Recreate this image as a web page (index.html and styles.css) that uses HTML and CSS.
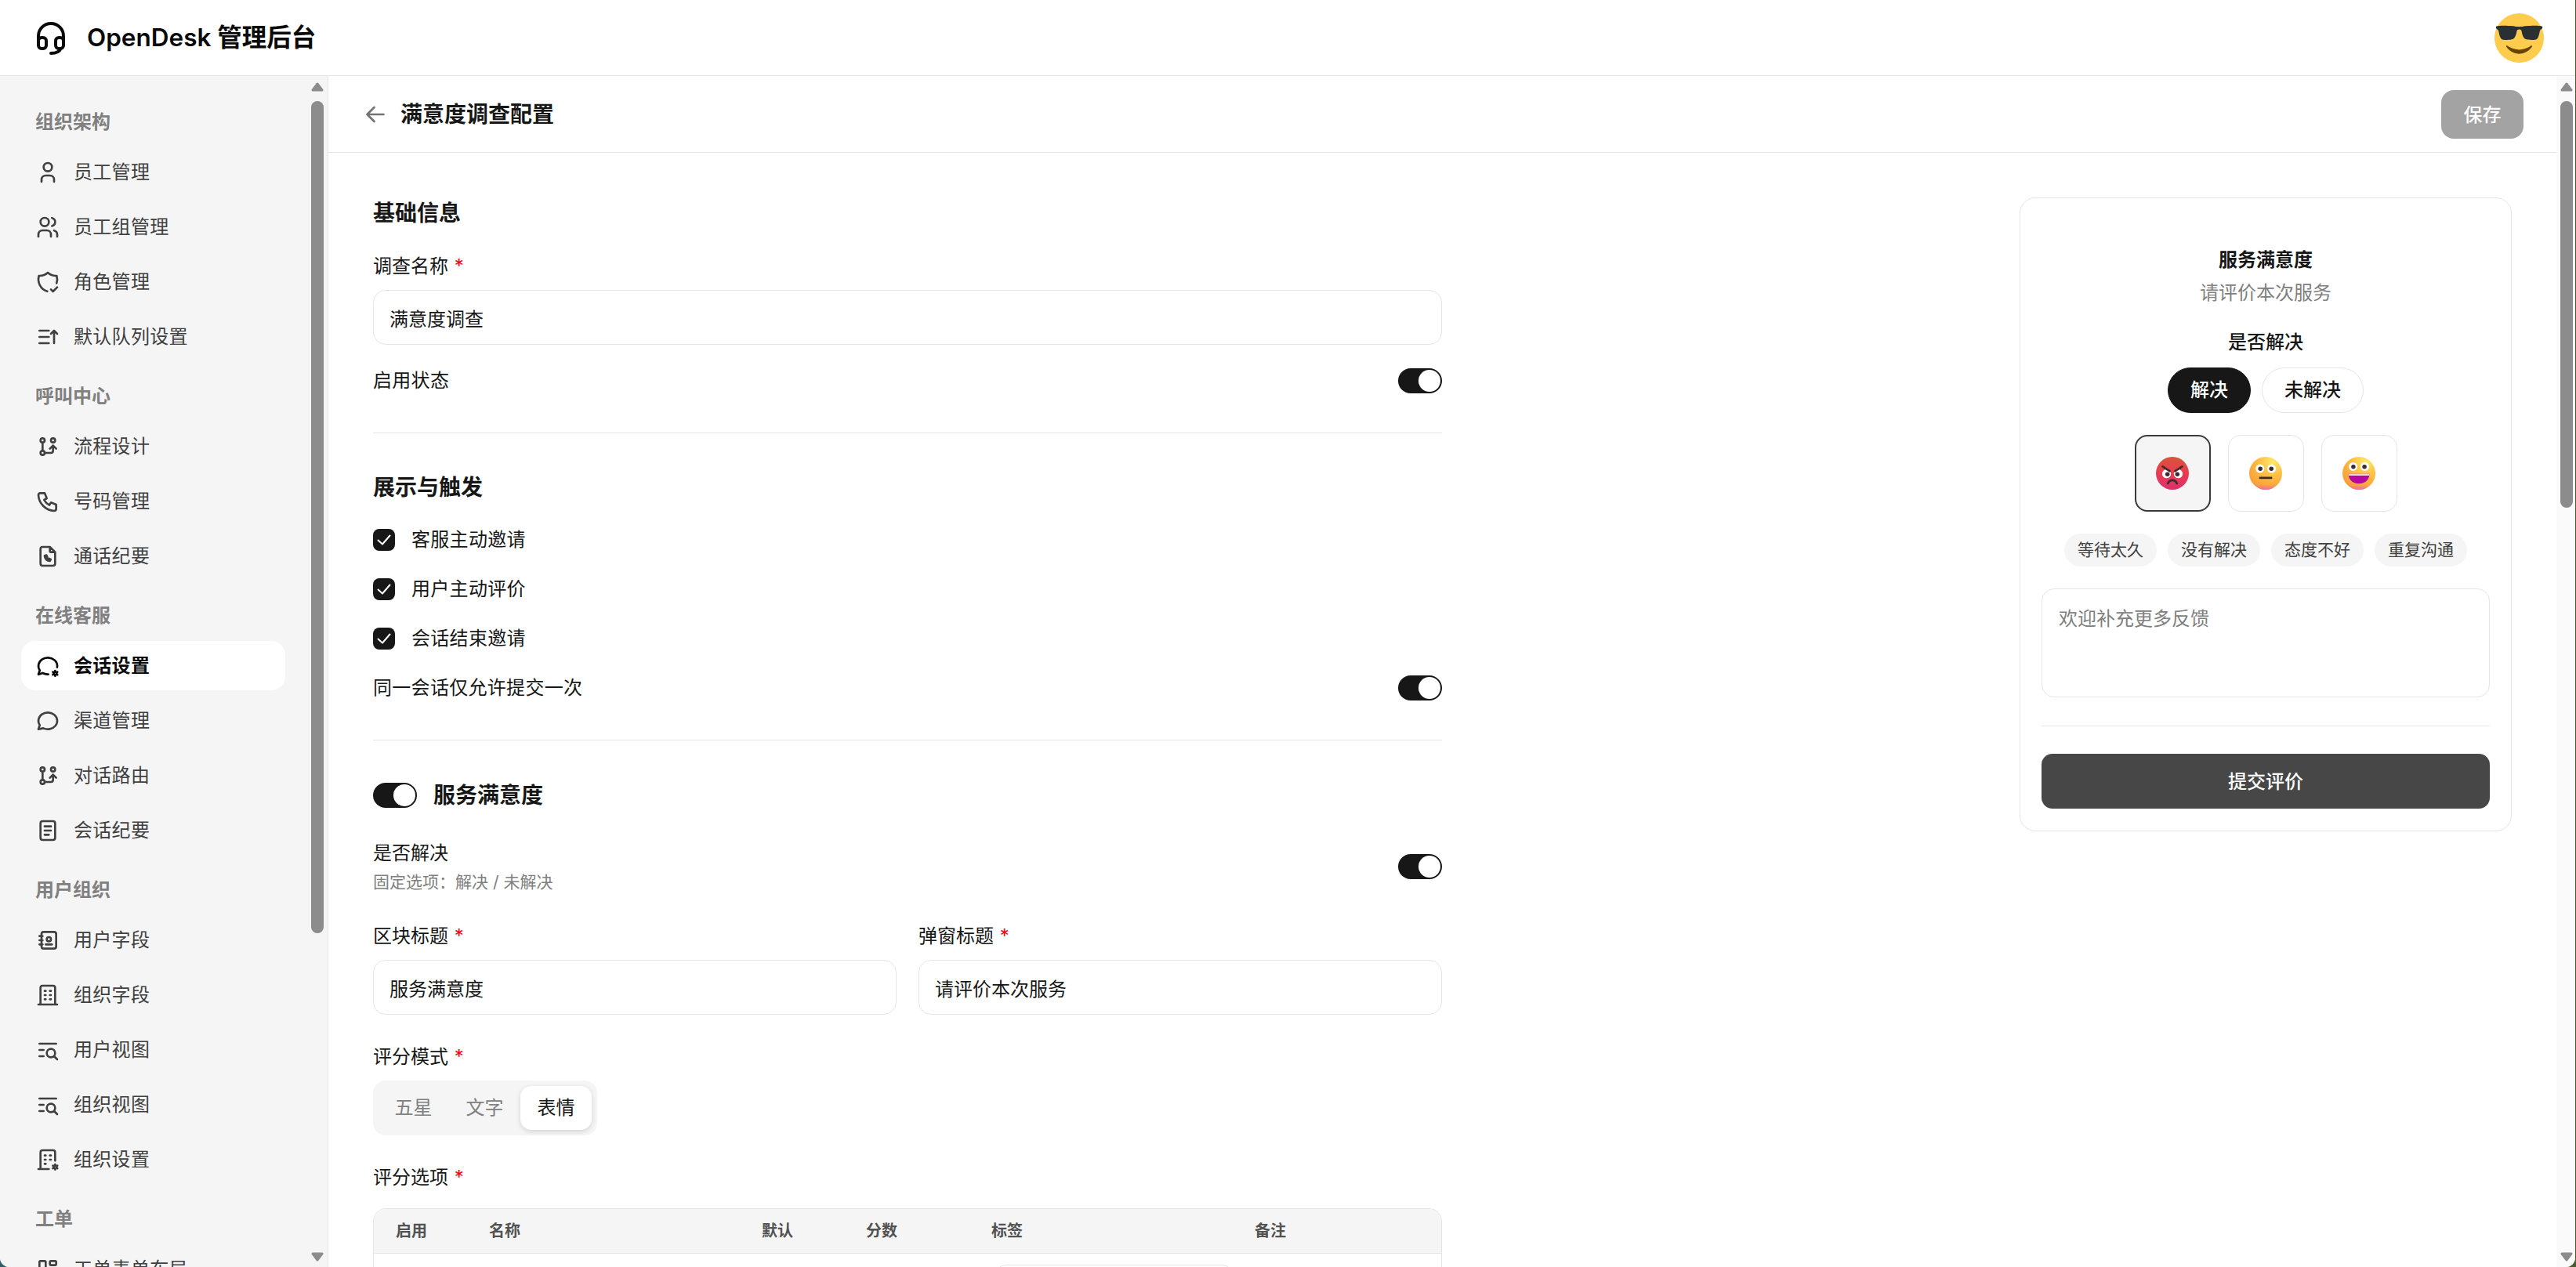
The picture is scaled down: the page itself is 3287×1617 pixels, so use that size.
FILE: index.html
```html
<!DOCTYPE html>
<html>
<head>
  <meta charset="UTF-8">
  <meta name="viewport" content="width=device-width, initial-scale=1.0">
  <title>OpenDesk 管理后台</title>
  <link rel="stylesheet" href="styles.css">
</head>
<body>
  <!-- Icon sprite -->
  <svg class="sprite" xmlns="http://www.w3.org/2000/svg">
    <defs>
      <linearGradient id="g-angry" x1="0" y1="0" x2="0" y2="1">
        <stop offset="0" stop-color="#d6563a"/>
        <stop offset="0.45" stop-color="#ea3d4c"/>
        <stop offset="1" stop-color="#de2f6c"/>
      </linearGradient>
      <radialGradient id="g-warm" cx="0.72" cy="0.15" r="1">
        <stop offset="0" stop-color="#ffe96b"/>
        <stop offset="0.45" stop-color="#fdbd42"/>
        <stop offset="0.9" stop-color="#f89d38"/>
        <stop offset="1" stop-color="#f5923f"/>
      </radialGradient>
      <linearGradient id="g-blush" x1="0" y1="0.84" x2="0" y2="1">
        <stop offset="0" stop-color="#f06fa0" stop-opacity="0"/>
        <stop offset="1" stop-color="#f06fa0"/>
      </linearGradient>
    </defs>
    <symbol id="i-headset" viewBox="0 0 24 24"><path d="M4 14v-3a8 8 0 1 1 16 0v3M18 19c0 1.657-2.686 3-6 3M4 14a2 2 0 0 1 2-2h1a2 2 0 0 1 2 2v3a2 2 0 0 1-2 2h-1a2 2 0 0 1-2-2zM15 14a2 2 0 0 1 2-2h1a2 2 0 0 1 2 2v3a2 2 0 0 1-2 2h-1a2 2 0 0 1-2-2z"/></symbol>
    <symbol id="i-user" viewBox="0 0 24 24"><path d="M8 7a4 4 0 1 0 8 0a4 4 0 0 0-8 0M6 21v-2a4 4 0 0 1 4-4h4a4 4 0 0 1 4 4v2"/></symbol>
    <symbol id="i-users" viewBox="0 0 24 24"><path d="M5 7a4 4 0 1 0 8 0a4 4 0 1 0-8 0M3 21v-2a4 4 0 0 1 4-4h4a4 4 0 0 1 4 4v2M16 3.13a4 4 0 0 1 0 7.75M21 21v-2a4 4 0 0 0-3-3.85"/></symbol>
    <symbol id="i-shield" viewBox="0 0 24 24"><path d="M11.46 20.846a12 12 0 0 1-7.96-14.846a12 12 0 0 0 8.5-3a12 12 0 0 0 8.5 3a12 12 0 0 1-.09 7.06M15 19l2 2l4-4"/></symbol>
    <symbol id="i-queue" viewBox="0 0 24 24"><path d="M4 6h9M4 12h9M4 18h9M15 9l3-3l3 3M18 6v12"/></symbol>
    <symbol id="i-branch" viewBox="0 0 24 24"><path d="M5 18a2 2 0 1 0 4 0a2 2 0 1 0-4 0M5 6a2 2 0 1 0 4 0a2 2 0 1 0-4 0M15 6a2 2 0 1 0 4 0a2 2 0 1 0-4 0M7 8v8M9 18h6a2 2 0 0 0 2-2v-5M14 14l3-3l3 3"/></symbol>
    <symbol id="i-phone" viewBox="0 0 24 24"><path d="M5 4h4l2 5l-2.5 1.5a11 11 0 0 0 5 5l1.5-2.5l5 2v4a2 2 0 0 1-2 2a16 16 0 0 1-15-15a2 2 0 0 1 2-2"/></symbol>
    <symbol id="i-file-phone" viewBox="0 0 24 24"><path d="M14 3v4a1 1 0 0 0 1 1h4M17 21h-10a2 2 0 0 1-2-2v-14a2 2 0 0 1 2-2h7l5 5v11a2 2 0 0 1-2 2zM9 11.5c0 2.8 2.2 5 5 5l.8-1.6l-1.8-.8l-.8.8c-.7-.3-1.2-.9-1.5-1.5l.8-.8l-.8-1.7z"/></symbol>
    <symbol id="i-chat-cog" viewBox="0 0 24 24"><path d="M12.5 19.9c-1.8.1-3.7-.3-5.5-1.2l-4 1.3l1.3-3.9c-2.324-3.437-1.426-7.872 2.1-10.374c3.526-2.501 8.59-2.296 11.845.48c2.2 1.9 3.1 4.5 2.7 7"/><path d="M19 16.5v1M19 20.5v1M16.8 17.7l.9.5M20.3 19.8l.9.5M16.8 20.3l.9-.5M20.3 18.2l.9-.5"/><circle cx="19" cy="19" r="1.4"/></symbol>
    <symbol id="i-chat" viewBox="0 0 24 24"><path d="M3 20l1.3-3.9c-2.324-3.437-1.426-7.872 2.1-10.374c3.526-2.501 8.59-2.296 11.845.48c3.255 2.777 3.695 7.266 1.029 10.501c-2.666 3.235-7.615 4.215-11.574 2.293l-4.7 1"/></symbol>
    <symbol id="i-note" viewBox="0 0 24 24"><path d="M5 5a2 2 0 0 1 2-2h10a2 2 0 0 1 2 2v14a2 2 0 0 1-2 2h-10a2 2 0 0 1-2-2zM9 8h6M9 12h6M9 16h4"/></symbol>
    <symbol id="i-contacts" viewBox="0 0 24 24"><path d="M20 6v12a2 2 0 0 1-2 2h-10a2 2 0 0 1-2-2v-12a2 2 0 0 1 2-2h10a2 2 0 0 1 2 2zM10 16h6M11 11a2 2 0 1 0 4 0a2 2 0 1 0-4 0M4 8h3M4 12h3M4 16h3"/></symbol>
    <symbol id="i-building" viewBox="0 0 24 24"><path d="M3 21h18M9 8h1M9 12h1M9 16h1M14 8h1M14 12h1M14 16h1M5 21v-16a2 2 0 0 1 2-2h10a2 2 0 0 1 2 2v16"/></symbol>
    <symbol id="i-list-search" viewBox="0 0 24 24"><path d="M11 15a4 4 0 1 0 8 0a4 4 0 1 0-8 0M18 18l3 3M4 6h16M4 12h4M4 18h4"/></symbol>
    <symbol id="i-building-cog" viewBox="0 0 24 24"><path d="M3 21h10M9 8h1M9 12h1M9 16h1M14 8h1M14 12h1M5 21v-16a2 2 0 0 1 2-2h10a2 2 0 0 1 2 2v8"/><path d="M19 16.5v1M19 20.5v1M16.8 17.7l.9.5M20.3 19.8l.9.5M16.8 20.3l.9-.5M20.3 18.2l.9-.5"/><circle cx="19" cy="19" r="1.4"/></symbol>
    <symbol id="i-layout" viewBox="0 0 24 24"><path d="M4 5a1 1 0 0 1 1-1h4a1 1 0 0 1 1 1v14a1 1 0 0 1-1 1h-4a1 1 0 0 1-1-1zM14 5a1 1 0 0 1 1-1h4a1 1 0 0 1 1 1v2a1 1 0 0 1-1 1h-4a1 1 0 0 1-1-1zM14 13a1 1 0 0 1 1-1h4a1 1 0 0 1 1 1v6a1 1 0 0 1-1 1h-4a1 1 0 0 1-1-1z"/></symbol>
    <symbol id="i-back" viewBox="0 0 24 24"><path d="M5 12h14M5 12l6 6M5 12l6-6"/></symbol>
    <symbol id="i-check" viewBox="0 0 28 28"><path d="M6.5 14.5l5.5 5l9.5-11"/></symbol>
    <symbol id="tri-up" viewBox="0 0 16 12"><path d="M8 2L14 10H2z"/></symbol>
    <symbol id="tri-down" viewBox="0 0 16 12"><path d="M8 10L14 2H2z"/></symbol>
    <symbol id="e-cool" viewBox="0 0 36 36">
      <path fill="#FFCC4D" d="M36 18c0 9.941-8.059 18-18 18-9.94 0-18-8.059-18-18C0 8.06 8.06 0 18 0c9.941 0 18 8.06 18 18"/>
      <path fill="#292F33" d="M1.24 11.018c.24.239 1.438.957 1.677 1.675.24.717.72 4.784 2.158 5.981 1.483 1.232 7.077.774 8.148.24 2.397-1.195 2.691-4.531 3.115-6.221.239-.957 1.677-.957 1.677-.957s1.438 0 1.678.956c.424 1.691.72 5.027 3.115 6.221 1.072.535 6.666.994 8.151-.238 1.436-1.197 1.915-5.264 2.155-5.982.238-.717 1.438-1.435 1.677-1.674.241-.239.241-1.196 0-1.436-.479-.478-6.134-.904-12.223-.239-1.215.133-1.677.478-4.554.478-2.875 0-3.339-.346-4.553-.478-6.085-.664-11.741-.238-12.221.24-.239.239-.239 1.196 0 1.435z"/>
      <path fill="#664500" d="M27.335 23.629c-.178-.161-.444-.171-.635-.029-.039.029-3.922 2.9-8.7 2.9-4.766 0-8.662-2.871-8.7-2.9-.191-.142-.457-.13-.635.029-.177.16-.217.424-.094.628C8.7 24.472 11.788 29.5 18 29.5s9.301-5.028 9.429-5.243c.123-.205.084-.468-.094-.628z"/>
    </symbol>
    <symbol id="e-angry" viewBox="0 0 32 32">
      <circle cx="16" cy="16" r="16" fill="url(#g-angry)"/>
      <circle cx="10.3" cy="16.5" r="4.3" fill="#fff"/>
      <circle cx="21.7" cy="16.5" r="4.3" fill="#fff"/>
      <circle cx="11.2" cy="17" r="2.1" fill="#402a32"/>
      <circle cx="20.8" cy="17" r="2.1" fill="#402a32"/>
      <path d="M6.5 9.5l7 4.5M25.5 9.5l-7 4.5M11.5 26c1-2.2 2.8-3.2 4.5-3.2s3.5 1 4.5 3.2" fill="none" stroke="#402a32" stroke-width="2" stroke-linecap="round"/>
    </symbol>
    <symbol id="e-neutral" viewBox="0 0 32 32">
      <circle cx="16" cy="16" r="16" fill="url(#g-warm)"/>
      <circle cx="16" cy="16" r="16" fill="url(#g-blush)"/>
      <circle cx="10.5" cy="11.5" r="4.2" fill="#fff"/>
      <circle cx="21.8" cy="11.5" r="4.2" fill="#fff"/>
      <circle cx="10.8" cy="11.7" r="2.1" fill="#402a32"/>
      <circle cx="21.5" cy="11.7" r="2.1" fill="#402a32"/>
      <path d="M10.5 20.5h11" fill="none" stroke="#402a32" stroke-width="2" stroke-linecap="round"/>
    </symbol>
    <symbol id="e-happy" viewBox="0 0 32 32">
      <circle cx="16" cy="16" r="16" fill="url(#g-warm)"/>
      <circle cx="16" cy="16" r="16" fill="url(#g-blush)"/>
      <circle cx="10.3" cy="9.5" r="4.2" fill="#fff"/>
      <circle cx="21.7" cy="9.5" r="4.2" fill="#fff"/>
      <circle cx="10.6" cy="9.7" r="2.1" fill="#402a32"/>
      <circle cx="21.4" cy="9.7" r="2.1" fill="#402a32"/>
      <path d="M5.8 16.5h20.4c0 5.5-4 9.5-10.2 9.5S5.800 22 5.800 16.500z" fill="#b8079c"/>
      <path d="M5.8 16.5h20.4c0 .7-.1 1.3-.2 1.8H6c-.1-.5-.2-1.100-.2-1.800z" fill="#f3d6ee"/>
    </symbol>
  </svg>

  <div class="app">
    <header class="topbar">
      <div class="brand">
        <svg class="brand-icon"><use href="#i-headset"/></svg>
        <span class="brand-name">OpenDesk 管理后台</span>
      </div>
      <svg class="avatar"><use href="#e-cool"/></svg>
    </header>

    <div class="layout">
      <aside class="sidebar">
        <nav class="side-nav">
          <div class="nav-group">
            <div class="nav-title">组织架构</div>
            <a class="nav-item"><svg class="nav-icon"><use href="#i-user"/></svg>员工管理</a>
            <a class="nav-item"><svg class="nav-icon"><use href="#i-users"/></svg>员工组管理</a>
            <a class="nav-item"><svg class="nav-icon"><use href="#i-shield"/></svg>角色管理</a>
            <a class="nav-item"><svg class="nav-icon"><use href="#i-queue"/></svg>默认队列设置</a>
          </div>
          <div class="nav-group">
            <div class="nav-title">呼叫中心</div>
            <a class="nav-item"><svg class="nav-icon"><use href="#i-branch"/></svg>流程设计</a>
            <a class="nav-item"><svg class="nav-icon"><use href="#i-phone"/></svg>号码管理</a>
            <a class="nav-item"><svg class="nav-icon"><use href="#i-file-phone"/></svg>通话纪要</a>
          </div>
          <div class="nav-group">
            <div class="nav-title">在线客服</div>
            <a class="nav-item active"><svg class="nav-icon"><use href="#i-chat-cog"/></svg>会话设置</a>
            <a class="nav-item"><svg class="nav-icon"><use href="#i-chat"/></svg>渠道管理</a>
            <a class="nav-item"><svg class="nav-icon"><use href="#i-branch"/></svg>对话路由</a>
            <a class="nav-item"><svg class="nav-icon"><use href="#i-note"/></svg>会话纪要</a>
          </div>
          <div class="nav-group">
            <div class="nav-title">用户组织</div>
            <a class="nav-item"><svg class="nav-icon"><use href="#i-contacts"/></svg>用户字段</a>
            <a class="nav-item"><svg class="nav-icon"><use href="#i-building"/></svg>组织字段</a>
            <a class="nav-item"><svg class="nav-icon"><use href="#i-list-search"/></svg>用户视图</a>
            <a class="nav-item"><svg class="nav-icon"><use href="#i-list-search"/></svg>组织视图</a>
            <a class="nav-item"><svg class="nav-icon"><use href="#i-building-cog"/></svg>组织设置</a>
          </div>
          <div class="nav-group">
            <div class="nav-title">工单</div>
            <a class="nav-item"><svg class="nav-icon"><use href="#i-layout"/></svg>工单表单布局</a>
          </div>
        </nav>
        <div class="scrollbar side-scrollbar">
          <svg class="scroll-arrow"><use href="#tri-up"/></svg>
          <div class="scroll-thumb"></div>
          <svg class="scroll-arrow bottom"><use href="#tri-down"/></svg>
        </div>
      </aside>

      <main class="main">
        <div class="page">
          <div class="page-header">
            <div class="page-title">
              <svg class="back-icon"><use href="#i-back"/></svg>
              <h1>满意度调查配置</h1>
            </div>
            <button class="save-btn">保存</button>
          </div>

          <div class="page-body">
            <form class="form">
              <h2 class="section-title">基础信息</h2>
              <label class="field-label first">调查名称 <span class="req">*</span></label>
              <input class="text-input" type="text" value="满意度调查">
              <div class="switch-row gap-m">
                <span>启用状态</span>
                <span class="toggle"><i></i></span>
              </div>
              <hr class="divider">

              <h2 class="section-title">展示与触发</h2>
              <div class="check-list">
                <div class="check-row"><svg class="checkbox"><use href="#i-check"/></svg>客服主动邀请</div>
                <div class="check-row"><svg class="checkbox"><use href="#i-check"/></svg>用户主动评价</div>
                <div class="check-row"><svg class="checkbox"><use href="#i-check"/></svg>会话结束邀请</div>
                <div class="switch-row">
                  <span>同一会话仅允许提交一次</span>
                  <span class="toggle"><i></i></span>
                </div>
              </div>
              <hr class="divider">

              <div class="section-toggle">
                <span class="toggle"><i></i></span>
                <h2 class="section-title">服务满意度</h2>
              </div>
              <div class="switch-row resolve-row">
                <div>
                  <div class="resolve-name">是否解决</div>
                  <div class="hint">固定选项：解决 / 未解决</div>
                </div>
                <span class="toggle"><i></i></span>
              </div>

              <div class="two-col">
                <div>
                  <label class="field-label">区块标题 <span class="req">*</span></label>
                  <input class="text-input" type="text" value="服务满意度">
                </div>
                <div>
                  <label class="field-label">弹窗标题 <span class="req">*</span></label>
                  <input class="text-input" type="text" value="请评价本次服务">
                </div>
              </div>

              <label class="field-label spaced">评分模式 <span class="req">*</span></label>
              <div class="segmented">
                <span class="segment">五星</span>
                <span class="segment">文字</span>
                <span class="segment active">表情</span>
              </div>

              <label class="field-label spaced">评分选项 <span class="req">*</span></label>
              <div class="options-table">
                <div class="options-head">
                  <span>启用</span>
                  <span>名称</span>
                  <span>默认</span>
                  <span>分数</span>
                  <span>标签</span>
                  <span>备注</span>
                </div>
                <div class="options-row">
                  <div class="tag-box"></div>
                </div>
              </div>
            </form>

            <aside class="preview">
              <div class="preview-title">服务满意度</div>
              <div class="preview-sub">请评价本次服务</div>
              <div class="preview-question">是否解决</div>
              <div class="pill-row">
                <span class="pill active">解决</span>
                <span class="pill">未解决</span>
              </div>
              <div class="emoji-row">
                <span class="emoji-box active"><svg class="emoji"><use href="#e-angry"/></svg></span>
                <span class="emoji-box"><svg class="emoji"><use href="#e-neutral"/></svg></span>
                <span class="emoji-box"><svg class="emoji"><use href="#e-happy"/></svg></span>
              </div>
              <div class="chip-row">
                <span class="chip">等待太久</span>
                <span class="chip">没有解决</span>
                <span class="chip">态度不好</span>
                <span class="chip">重复沟通</span>
              </div>
              <textarea class="feedback" placeholder="欢迎补充更多反馈"></textarea>
              <hr class="preview-divider">
              <button class="submit-btn" type="button">提交评价</button>
            </aside>
          </div>
        </div>
        <div class="scrollbar main-scrollbar">
          <svg class="scroll-arrow"><use href="#tri-up"/></svg>
          <div class="scroll-thumb"></div>
          <svg class="scroll-arrow bottom"><use href="#tri-down"/></svg>
        </div>
      </main>
    </div>
  </div>
</body>
</html>
```

FILE: styles.css
```css
:root {
  --ink: #171717;
  --text: #404040;
  --muted: #808080;
  --line: #e5e5e5;
  --soft: #f5f5f5;
  --thumb: #8c8c8c;
}

* {
  box-sizing: border-box;
}

html, body {
  height: 100%;
}

body {
  margin: 0;
  overflow: hidden;
  background: linear-gradient(90deg, #2f5f66, #4a5a2a);
  font-family: Inter, "Noto Sans CJK SC", sans-serif;
  font-size: 24px;
  line-height: 36px;
  color: var(--ink);
}

.sprite {
  display: block;
  width: 0;
  height: 0;
}

.app {
  width: 3286px;
  height: 100%;
  display: flex;
  flex-direction: column;
  background-color: white;
  border-radius: 0 0 12px 12px;
  overflow: hidden;
}

/* Top bar */
.topbar {
  flex: none;
  height: 97px;
  padding: 0 40px 0 41px;
  display: flex;
  justify-content: space-between;
  align-items: center;
  border-bottom: 1px solid var(--line);
}

.brand {
  display: flex;
  align-items: center;
  gap: 22px;
}

.brand-icon {
  width: 48px;
  height: 48px;
  fill: none;
  stroke: #0a0a0a;
  stroke-width: 2;
  stroke-linecap: round;
  stroke-linejoin: round;
}

.brand-name {
  font-size: 31.5px;
  font-weight: 600;
  color: #0a0a0a;
}

.avatar {
  width: 63px;
  height: 63px;
}

.layout {
  flex: 1;
  min-height: 0;
  display: flex;
}

/* Sidebar */
.sidebar {
  flex: none;
  width: 419px;
  display: flex;
  background-color: var(--soft);
  border-right: 1px solid var(--line);
  overflow: hidden;
}

.side-nav {
  flex: none;
  width: 392px;
  padding: 41px 0 0 27px;
}

.nav-group {
  width: 337px;
  display: flex;
  flex-direction: column;
  gap: 7px;
  margin-bottom: 27px;
}

.nav-title {
  padding-left: 18px;
  margin-bottom: 7px;
  font-weight: 600;
  color: var(--muted);
}

.nav-item {
  flex: none;
  height: 63px;
  padding-left: 18px;
  display: flex;
  align-items: center;
  gap: 17px;
  border-radius: 18px;
  color: var(--text);
  letter-spacing: 0.3px;
}

.nav-item.active {
  background-color: white;
  color: #0a0a0a;
  font-weight: 700;
}

.nav-icon {
  flex: none;
  width: 32px;
  height: 32px;
  fill: none;
  stroke: currentColor;
  stroke-width: 2;
  stroke-linecap: round;
  stroke-linejoin: round;
}

/* Scrollbars */
.scrollbar {
  flex: none;
  display: flex;
  flex-direction: column;
  align-items: center;
  padding-top: 8px;
  padding-bottom: 7px;
}

.scroll-arrow {
  flex: none;
  width: 16px;
  height: 12px;
  fill: var(--thumb);
  stroke: var(--thumb);
  stroke-width: 3;
  stroke-linejoin: round;
}

.scroll-arrow.bottom {
  margin-top: auto;
}

.scroll-thumb {
  flex: none;
  width: 16px;
  margin-top: 12px;
  border-radius: 8px;
  background-color: var(--thumb);
}

.side-scrollbar {
  width: 26px;
  padding-right: 5px;
  padding-left: 5px;
}

.side-scrollbar .scroll-thumb {
  height: 1062px;
}

.main-scrollbar {
  width: 24px;
  padding-right: 3px;
  padding-left: 5px;
  background-color: #fafafa;
}

.main-scrollbar .scroll-thumb {
  height: 519px;
}

/* Main */
.main {
  flex: 1;
  min-width: 0;
  display: flex;
}

.page {
  flex: 1;
  min-width: 0;
}

.page-header {
  height: 98px;
  padding: 0 42px 0 42px;
  display: flex;
  justify-content: space-between;
  align-items: center;
  border-bottom: 1px solid var(--line);
}

.page-title {
  display: flex;
  align-items: center;
  gap: 14px;
}

.page-title h1 {
  margin: 0;
  font-size: 28px;
  font-weight: 600;
  line-height: 40px;
}

.back-icon {
  width: 36px;
  height: 36px;
  fill: none;
  stroke: #737373;
  stroke-width: 1.8;
  stroke-linecap: round;
  stroke-linejoin: round;
}

.save-btn {
  width: 105px;
  height: 62px;
  padding: 0 0 3px;
  border: none;
  border-radius: 16px;
  background-color: #a3a3a3;
  color: white;
  font: 500 24px Inter, "Noto Sans CJK SC", sans-serif;
}

.page-body {
  display: flex;
  justify-content: space-between;
  align-items: flex-start;
  padding: 57px 57px 0;
}

/* Form */
.form {
  flex: none;
  width: 1364px;
}

.section-title {
  margin: 0;
  font-size: 28px;
  font-weight: 600;
  line-height: 40px;
}

.divider + .section-title {
  margin-top: 1px;
  margin-bottom: -1px;
}

.section-toggle .section-title {
  padding-top: 1px;
}

.field-label {
  display: block;
  padding-top: 2px;
  margin-bottom: 12px;
}

.field-label.first {
  margin-top: 28px;
}

.field-label.spaced {
  margin-top: 34px;
}

.req {
  margin-left: 1px;
  color: #f5000f;
}

.text-input {
  display: block;
  width: 100%;
  height: 70px;
  padding: 0 20px;
  border: 1px solid var(--line);
  border-radius: 16px;
  background-color: white;
  color: var(--ink);
  font: 24px Inter, "Noto Sans CJK SC", sans-serif;
}

.switch-row {
  display: flex;
  justify-content: space-between;
  align-items: center;
  letter-spacing: 0.3px;
}

.gap-m {
  margin-top: 28px;
}

.toggle {
  flex: none;
  width: 56px;
  height: 32px;
  padding: 2px;
  display: flex;
  justify-content: flex-end;
  border-radius: 16px;
  background-color: var(--ink);
}

.toggle i {
  width: 28px;
  height: 28px;
  border-radius: 50%;
  background-color: white;
}

.divider {
  height: 1px;
  margin: 48px 0 49px;
  border: none;
  background-color: var(--line);
}

.check-list {
  margin-top: 30px;
  display: flex;
  flex-direction: column;
  gap: 27px;
}

.check-row {
  display: flex;
  align-items: center;
  gap: 21px;
  letter-spacing: 0.3px;
}

.checkbox {
  flex: none;
  width: 28px;
  height: 28px;
  border-radius: 8px;
  background-color: var(--ink);
  fill: none;
  stroke: white;
  stroke-width: 2;
  stroke-linecap: round;
  stroke-linejoin: round;
}

.section-toggle {
  display: flex;
  align-items: center;
  gap: 21px;
}

.resolve-row {
  margin-top: 36px;
  letter-spacing: 0;
}

.hint {
  margin-top: 5px;
  font-size: 21px;
  line-height: 28px;
  color: var(--muted);
}

.two-col {
  margin-top: 35px;
  display: grid;
  grid-template-columns: 1fr 1fr;
  gap: 28px;
}

.segmented {
  width: 286px;
  height: 70px;
  padding: 7px 6px;
  display: flex;
  border-radius: 16px;
  background-color: var(--soft);
}

.segment {
  width: 91px;
  display: flex;
  justify-content: center;
  align-items: center;
  border-radius: 14px;
  color: var(--muted);
}

.segment.active {
  background-color: white;
  color: var(--ink);
  box-shadow: 0 2px 6px rgba(0, 0, 0, 0.14);
}

.field-label.spaced + .options-table {
  margin-top: 21px;
}

.options-table {
  border: 1px solid var(--line);
  border-radius: 16px;
  overflow: hidden;
}

.options-head {
  height: 57px;
  padding-left: 28px;
  display: grid;
  grid-template-columns: 119px 348px 133px 160px 336px 1fr;
  align-items: center;
  background-color: var(--soft);
  border-bottom: 1px solid var(--line);
  font-size: 20px;
  font-weight: 600;
  color: #525252;
}

.options-row {
  padding: 14px 0 14px 791px;
}

.tag-box {
  width: 307px;
  height: 70px;
  border: 1px solid var(--line);
  border-radius: 16px;
}

/* Preview card */
.preview {
  flex: none;
  width: 628px;
  padding: 61px 27px 28px;
  display: flex;
  flex-direction: column;
  align-items: center;
  border: 1px solid var(--line);
  border-radius: 20px;
}

.preview-title {
  font-weight: 600;
}

.preview-sub {
  margin-top: 6px;
  color: var(--muted);
}

.preview-question {
  margin-top: 27px;
  font-weight: 500;
}

.pill-row {
  margin-top: 14px;
  display: flex;
  gap: 14px;
}

.pill {
  height: 58px;
  padding: 0 28px;
  display: flex;
  align-items: center;
  border: 1px solid var(--line);
  border-radius: 29px;
  font-weight: 500;
}

.pill.active {
  background-color: var(--ink);
  border-color: var(--ink);
  color: white;
}

.emoji-row {
  margin-top: 28px;
  display: flex;
  gap: 22px;
}

.emoji-box {
  width: 97px;
  height: 98px;
  display: flex;
  justify-content: center;
  align-items: center;
  border: 1px solid var(--line);
  border-radius: 16px;
}

.emoji-box.active {
  background-color: var(--soft);
  border: 2px solid #3a3a3a;
}

.emoji {
  width: 42px;
  height: 42px;
}

.chip-row {
  margin-top: 28px;
  display: flex;
  gap: 14px;
}

.chip {
  height: 42px;
  padding: 0 17px;
  border-radius: 21px;
  background-color: var(--soft);
  color: var(--text);
  font-size: 21px;
  line-height: 42px;
}

.feedback {
  display: block;
  width: 100%;
  height: 139px;
  margin-top: 28px;
  padding: 20px 21px;
  border: 1px solid var(--line);
  border-radius: 16px;
  resize: none;
  font: 24px/36px Inter, "Noto Sans CJK SC", sans-serif;
}

.feedback::placeholder {
  color: var(--muted);
}

.preview-divider {
  width: 100%;
  height: 1px;
  margin: 36px 0 35px;
  border: none;
  background-color: var(--line);
}

.submit-btn {
  width: 100%;
  height: 70px;
  padding: 0 0 3px;
  border: none;
  border-radius: 14px;
  background-color: #474747;
  color: white;
  font: 500 24px Inter, "Noto Sans CJK SC", sans-serif;
}
```
